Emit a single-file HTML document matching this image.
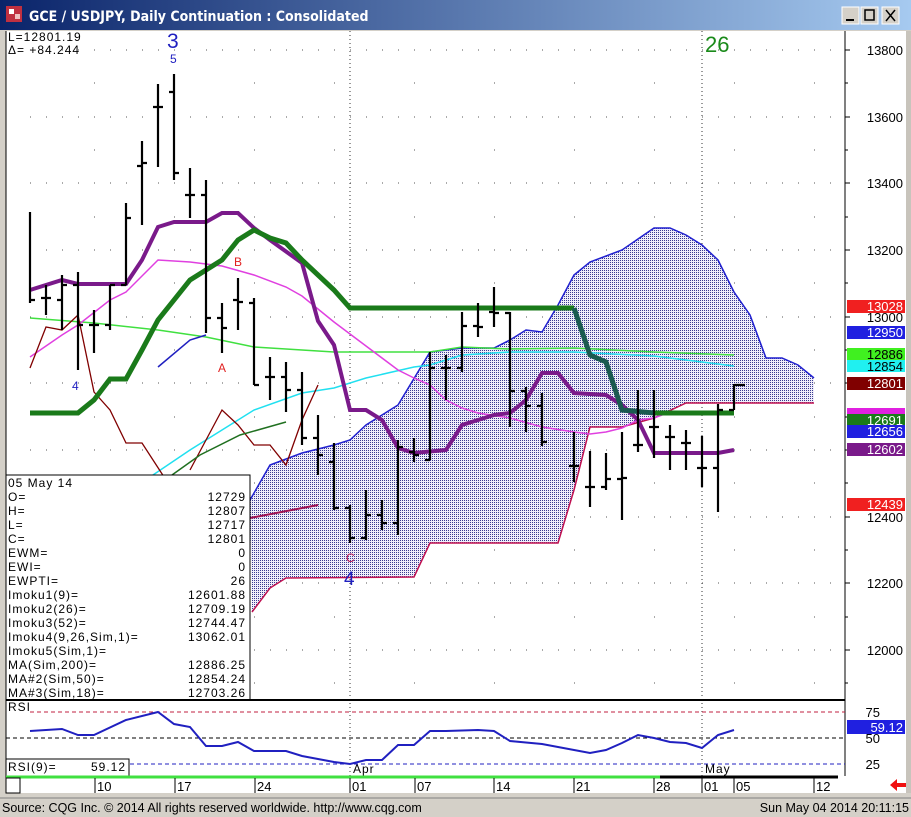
<!DOCTYPE html>
<html><head><meta charset="utf-8"><style>
html,body{margin:0;padding:0;background:#d4d0c8;}
svg{display:block;font-family:"Liberation Sans",sans-serif;}
.m{font-family:"Liberation Sans",sans-serif;font-size:12px;letter-spacing:1px;}
.ax{font-size:13px;fill:#000;}
.lb{font-size:13px;fill:#fff;}
</style></head><body>
<svg width="911" height="817" viewBox="0 0 911 817" xmlns="http://www.w3.org/2000/svg">
<defs>
<linearGradient id="tb" x1="0" x2="1"><stop offset="0" stop-color="#0a246a"/><stop offset="1" stop-color="#a6caf0"/></linearGradient>
<pattern id="dots" width="2" height="2" patternUnits="userSpaceOnUse"><rect width="2" height="2" fill="#f0eefa"/><rect width="1" height="1" fill="#3a3a90"/></pattern>
</defs>
<rect width="911" height="817" fill="#d4d0c8"/>
<rect x="0" y="0" width="911" height="30" fill="url(#tb)"/>
<rect x="6" y="6" width="16" height="16" fill="#c03040"/><rect x="9" y="9" width="5" height="5" fill="#fff"/><rect x="15" y="14" width="5" height="5" fill="#f0c0c0"/>
<text x="29" y="21" font-size="14" fill="#fff" font-weight="bold" style="font-family:'DejaVu Sans Condensed','Liberation Sans',sans-serif">GCE / USDJPY, Daily Continuation : Consolidated</text>
<g fill="#d4d0c8" stroke="#fff"><rect x="842" y="7" width="17" height="17"/><rect x="861" y="7" width="17" height="17"/><rect x="882" y="7" width="17" height="17"/></g>
<g stroke="#000" fill="none" stroke-width="1.5"><line x1="846" y1="20" x2="854" y2="20" stroke-width="2"/><rect x="865" y="10" width="9" height="10"/><path d="M886 10l9 11M895 10l-9 11"/></g>
<rect x="6" y="31" width="900" height="762" fill="#fff"/>
<rect x="906" y="31" width="5" height="762" fill="#c8c4bc"/>
<g stroke="#555" stroke-width="1" stroke-dasharray="1,15">
<line x1="30" y1="50" x2="840" y2="50"/><line x1="30" y1="117" x2="840" y2="117"/><line x1="30" y1="183" x2="840" y2="183"/><line x1="30" y1="250" x2="840" y2="250"/><line x1="30" y1="317" x2="840" y2="317"/><line x1="30" y1="383" x2="840" y2="383"/><line x1="30" y1="450" x2="840" y2="450"/><line x1="30" y1="517" x2="840" y2="517"/><line x1="30" y1="583" x2="840" y2="583"/><line x1="30" y1="650" x2="840" y2="650"/>
</g>
<g stroke="#555" stroke-dasharray="1,79"><line x1="94" y1="83" x2="840" y2="83"/><line x1="94" y1="150" x2="840" y2="150"/><line x1="94" y1="217" x2="840" y2="217"/><line x1="94" y1="283" x2="840" y2="283"/><line x1="94" y1="350" x2="840" y2="350"/><line x1="94" y1="417" x2="840" y2="417"/><line x1="94" y1="483" x2="840" y2="483"/><line x1="94" y1="550" x2="840" y2="550"/><line x1="94" y1="617" x2="840" y2="617"/><line x1="94" y1="683" x2="840" y2="683"/></g>
<g stroke="#333" stroke-dasharray="1,3"><line x1="350" y1="31" x2="350" y2="780"/><line x1="702" y1="31" x2="702" y2="780"/></g>
<polygon fill="url(#dots)" points="250,500 270,465 302,453 334,445 350,440 366,425 398,405 430,352 462,348 494,348 510,340 526,330 542,332 558,305 574,275 590,262 622,250 654,228 670,228 686,235 702,245 718,260 734,292 750,315 766,358 782,358 798,365 814,378 814,403 686,403 654,418 622,427 590,427 574,490 558,543 430,543 414,577 286,578 270,588 252,612"/>
<polyline fill="none" stroke="#2020d0" stroke-width="1.5" points="250,500 270,465 302,453 334,445 350,440 366,425 398,405 430,352 462,348 494,348 510,340 526,330 542,332 558,305 574,275 590,262 622,250 654,228 670,228 686,235 702,245 718,260 734,292 750,315 766,358 782,358 798,365 814,378"/>
<polyline fill="none" stroke="#c01050" stroke-width="1.5" points="252,612 270,588 286,578 414,577 430,543 558,543 574,490 590,427 622,427 654,418 686,403 814,403"/>
<polyline fill="none" stroke="#a01050" stroke-width="2" points="250,518 318,505"/>
<polyline fill="none" stroke="#40e040" stroke-width="1.5" points="30,318 94,323 158,330 206,337 254,347 302,350 334,352 430,352 462,347 510,349 574,348 654,352 734,355"/>
<polyline fill="none" stroke="#20e0f0" stroke-width="1.5" points="150,477 190,450 222,430 254,410 302,393 334,388 366,378 414,367 430,365 462,355 510,352 574,352 654,356 734,366"/>
<polyline fill="none" stroke="#e040e0" stroke-width="1.5" points="30,357 62,335 78,325 110,300 126,292 158,260 190,262 222,266 254,275 286,287 302,296 334,322 366,346 398,370 414,378 430,385 446,400 462,408 478,413 510,418 542,427 574,432 590,434 606,432 622,428 638,420 654,418 670,412 734,412"/>
<polyline fill="none" stroke="#800000" stroke-width="1.3" points="30,368 46,327 62,330 78,315 94,392 110,410 126,443 142,443 166,480"/>
<polyline fill="none" stroke="#800000" stroke-width="1.3" points="190,470 222,410 238,425 254,445 270,445 286,465 302,420 318,385"/>
<polyline fill="none" stroke="#207020" stroke-width="1.5" points="172,475 200,455 240,435 286,422"/>
<polyline fill="none" stroke="#2020c0" stroke-width="1.5" points="158,367 190,340 206,335"/>
<polyline fill="none" stroke="#7a1a8a" stroke-width="4" points="30,290 62,280 78,284 126,284 142,260 158,227 174,222 206,222 222,213 238,213 254,228 270,240 302,263 318,321 334,345 350,410 366,410 382,420 398,448 414,453 446,450 462,425 478,420 494,415 510,413 526,400 542,373 558,373 574,393 606,395 622,405 638,420 654,453 718,453 734,450"/>
<polyline fill="none" stroke="#1a7a1a" stroke-width="5" points="30,413 78,413 94,400 110,379 126,379 142,350 158,320 174,300 190,280 206,270 222,260 238,240 254,230 270,238 286,243 302,260 334,290 350,308 398,308 574,308"/>
<polyline fill="none" stroke="#1a5a50" stroke-width="5" points="574,308 590,355 606,362 622,410 654,413"/>
<polyline fill="none" stroke="#1a7a1a" stroke-width="5" points="654,413 734,413"/>
<text x="167" y="48" font-size="21" fill="#2020c0">3</text>
<text x="170" y="63" font-size="12" fill="#2020c0">5</text>
<text x="705" y="52" font-size="22" fill="#1a8a1a">26</text>
<text x="72" y="390" font-size="12" fill="#2020c0">4</text>
<text x="218" y="372" font-size="12" fill="#e02020">A</text>
<text x="234" y="266" font-size="12" fill="#e02020">B</text>
<text x="346" y="562" font-size="12" fill="#c01050">C</text>
<text x="344" y="585" font-size="19" fill="#2020c0">4</text>
<text x="8" y="41" class="m">L=12801.19</text>
<text x="8" y="54" class="m">Δ= +84.244</text>
<rect x="6" y="475" width="244" height="225" fill="#fff" stroke="#000"/>
<g class="m">
<text x="8" y="487">05 May 14</text>
<text x="8" y="501">O=</text><text x="246" y="501" text-anchor="end">12729</text>
<text x="8" y="515">H=</text><text x="246" y="515" text-anchor="end">12807</text>
<text x="8" y="529">L=</text><text x="246" y="529" text-anchor="end">12717</text>
<text x="8" y="543">C=</text><text x="246" y="543" text-anchor="end">12801</text>
<text x="8" y="557">EWM=</text><text x="246" y="557" text-anchor="end">0</text>
<text x="8" y="571">EWI=</text><text x="246" y="571" text-anchor="end">0</text>
<text x="8" y="585">EWPTI=</text><text x="246" y="585" text-anchor="end">26</text>
<text x="8" y="599">Imoku1(9)=</text><text x="246" y="599" text-anchor="end">12601.88</text>
<text x="8" y="613">Imoku2(26)=</text><text x="246" y="613" text-anchor="end">12709.19</text>
<text x="8" y="627">Imoku3(52)=</text><text x="246" y="627" text-anchor="end">12744.47</text>
<text x="8" y="641">Imoku4(9,26,Sim,1)=</text><text x="246" y="641" text-anchor="end">13062.01</text>
<text x="8" y="655">Imoku5(Sim,1)=</text>
<text x="8" y="669">MA(Sim,200)=</text><text x="246" y="669" text-anchor="end">12886.25</text>
<text x="8" y="683">MA#2(Sim,50)=</text><text x="246" y="683" text-anchor="end">12854.24</text>
<text x="8" y="697">MA#3(Sim,18)=</text><text x="246" y="697" text-anchor="end">12703.26</text>
</g>
<line x1="845" y1="31" x2="845" y2="776" stroke="#000"/>
<line x1="6" y1="31" x2="6" y2="793" stroke="#000"/>
<g stroke="#000"><path d="M845 50h5M845 83h3M845 117h5M845 150h3M845 183h5M845 217h3M845 250h5M845 283h3M845 317h5M845 350h3M845 383h5M845 417h3M845 450h5M845 483h3M845 517h5M845 550h3M845 583h5M845 617h3M845 650h5M845 683h3"/></g>
<g class="ax" text-anchor="end">
<text x="903" y="55">13800</text><text x="903" y="122">13600</text><text x="903" y="188">13400</text><text x="903" y="255">13200</text><text x="903" y="322">13000</text><text x="903" y="455">12600</text><text x="903" y="522">12400</text><text x="903" y="588">12200</text><text x="903" y="655">12000</text>
</g>
<g>
<rect x="847" y="300" width="58" height="13" fill="#f02020"/><text x="903" y="311" class="lb" text-anchor="end">13028</text>
<rect x="847" y="326" width="58" height="13" fill="#2020e0"/><text x="903" y="337" class="lb" text-anchor="end">12950</text>
<rect x="847" y="348" width="58" height="12" fill="#40f020"/><text x="903" y="359" class="ax" text-anchor="end">12886</text>
<rect x="847" y="360" width="58" height="12" fill="#20f0f0"/><text x="903" y="371" class="ax" text-anchor="end">12854</text>
<rect x="847" y="377" width="58" height="13" fill="#800000"/><text x="903" y="388" class="lb" text-anchor="end">12801</text>
<rect x="847" y="408" width="58" height="8" fill="#e020e0"/>
<rect x="847" y="414" width="58" height="13" fill="#1a7a1a"/><text x="903" y="425" class="lb" text-anchor="end">12691</text>
<rect x="847" y="425" width="58" height="13" fill="#2020e0"/><text x="903" y="436" class="lb" text-anchor="end">12656</text>
<rect x="847" y="443" width="58" height="13" fill="#7a1a8a"/><text x="903" y="454" class="lb" text-anchor="end">12602</text>
<rect x="847" y="498" width="58" height="13" fill="#f02020"/><text x="903" y="509" class="lb" text-anchor="end">12439</text>
</g>
<line x1="6" y1="700" x2="845" y2="700" stroke="#000" stroke-width="2"/>
<g stroke-dasharray="4,3" stroke-width="1"><line x1="30" y1="712" x2="845" y2="712" stroke="#c02040"/><line x1="6" y1="738" x2="845" y2="738" stroke="#000"/><line x1="130" y1="764" x2="845" y2="764" stroke="#2020c0"/></g>
<text x="8" y="711" class="m">RSI</text>
<polyline fill="none" stroke="#2020c0" stroke-width="2" points="30,731 62,729 78,735 94,735 126,720 158,712 174,724 190,727 206,746 222,746 238,742 254,751 286,751 302,756 334,762 350,764 366,760 382,760 398,745 414,745 430,731 446,731 478,730 494,731 510,741 542,744 558,747 590,753 606,750 622,743 638,735 654,738 670,742 686,743 702,748 718,735 734,730"/>
<rect x="6" y="759" width="123" height="17" fill="#fff" stroke="#000"/>
<text x="8" y="771" class="m">RSI(9)=</text><text x="126" y="771" class="m" text-anchor="end">59.12</text>
<text x="353" y="773" class="m">Apr</text><text x="705" y="773" class="m">May</text>
<g class="ax" text-anchor="end"><text x="880" y="717">75</text><text x="880" y="743">50</text><text x="880" y="769">25</text></g>
<rect x="847" y="720" width="58" height="14" fill="#2020e0"/><text x="903" y="732" class="lb" text-anchor="end">59.12</text>
<line x1="6" y1="777" x2="660" y2="777" stroke="#40e040" stroke-width="3"/>
<line x1="660" y1="777" x2="838" y2="777" stroke="#000" stroke-width="3"/>
<rect x="6" y="778" width="14" height="15" fill="#fff" stroke="#000"/>
<g stroke="#000"><line x1="95" y1="778" x2="95" y2="793"/><line x1="175" y1="778" x2="175" y2="793"/><line x1="255" y1="778" x2="255" y2="793"/><line x1="350" y1="778" x2="350" y2="793"/><line x1="415" y1="778" x2="415" y2="793"/><line x1="494" y1="778" x2="494" y2="793"/><line x1="574" y1="778" x2="574" y2="793"/><line x1="654" y1="778" x2="654" y2="793"/><line x1="702" y1="778" x2="702" y2="793"/><line x1="734" y1="778" x2="734" y2="793"/><line x1="814" y1="778" x2="814" y2="793"/></g>
<g class="ax"><text x="97" y="791">10</text><text x="177" y="791">17</text><text x="257" y="791">24</text><text x="352" y="791">01</text><text x="417" y="791">07</text><text x="496" y="791">14</text><text x="576" y="791">21</text><text x="656" y="791">28</text><text x="704" y="791">01</text><text x="736" y="791">05</text><text x="816" y="791">12</text></g>
<path d="M890 785l7-6v4h9v4h-9v4z" fill="#f01010"/>
<rect x="0" y="798" width="911" height="19" fill="#d4d0c8"/>
<line x1="0" y1="798" x2="911" y2="798" stroke="#808080"/>
<text x="2" y="812" font-size="12.5" fill="#000">Source: CQG Inc. © 2014 All rights reserved worldwide. http://www.cqg.com</text>
<text x="909" y="812" font-size="12.5" fill="#000" text-anchor="end">Sun May 04 2014 20:11:15</text>
<g stroke="#000" stroke-width="2.2" fill="none">
<path d="M30 212V303M30 300h5"/>
<path d="M46 285V315M41 298h5M46 298h5"/>
<path d="M62 275V330M57 300h5M62 285h5"/>
<path d="M78 272V370M73 285h5M78 325h5"/>
<path d="M94 310V353M89 325h5M94 325h5"/>
<path d="M110 285V330M105 325h5M110 285h5"/>
<path d="M126 203V285M121 285h5M126 218h5"/>
<path d="M142 141V225M137 166h5M142 163h5"/>
<path d="M158 84V167M153 107h5M158 107h5"/>
<path d="M174 74V180M169 92h5M174 173h5"/>
<path d="M190 168V218M185 195h5M190 195h5"/>
<path d="M206 180V333M201 195h5M206 318h5"/>
<path d="M222 303V353M217 318h5M222 328h5"/>
<path d="M238 278V330M233 300h5M238 302h5"/>
<path d="M254 298V385M249 303h5M254 385h5"/>
<path d="M270 357V400M265 377h5M270 377h5"/>
<path d="M286 362V412M281 377h5M286 390h5"/>
<path d="M302 372V445M297 390h5M302 438h5"/>
<path d="M318 415V475M313 438h5M318 455h5"/>
<path d="M334 443V510M329 462h5M334 508h5"/>
<path d="M350 505V543M345 508h5M350 538h5"/>
<path d="M366 490V540M361 538h5M366 515h5"/>
<path d="M382 500V530M377 515h5M382 523h5"/>
<path d="M398 440V535M393 523h5M398 447h5"/>
<path d="M414 438V462M409 452h5M414 455h5"/>
<path d="M430 352V460M425 460h5M430 368h5"/>
<path d="M446 355V400M441 368h5M446 368h5"/>
<path d="M462 312V372M457 368h5M462 326h5"/>
<path d="M478 303V337M473 326h5M478 327h5"/>
<path d="M494 287V327M489 312h5M494 313h5"/>
<path d="M510 312V427M505 313h5M510 391h5"/>
<path d="M526 387V432M521 391h5M526 406h5"/>
<path d="M542 393V446M537 406h5M542 442h5"/>
<path d="M574 432V482M569 466h5M574 466h5"/>
<path d="M590 451V507M585 487h5M590 487h5"/>
<path d="M606 453V490M601 487h5M606 479h5"/>
<path d="M622 432V520M617 479h5M622 478h5"/>
<path d="M638 390V452M633 445h5M638 445h5"/>
<path d="M654 390V458M649 427h5M654 427h5"/>
<path d="M670 425V470M665 437h5M670 437h5"/>
<path d="M686 430V470M681 443h5M686 443h5"/>
<path d="M702 436V487M697 468h5M702 468h5"/>
<path d="M718 404V512M713 468h5M718 410h5"/>
<path d="M734 384V410M729 410h5M734 385h11"/>
</g>
</svg>
</body></html>
